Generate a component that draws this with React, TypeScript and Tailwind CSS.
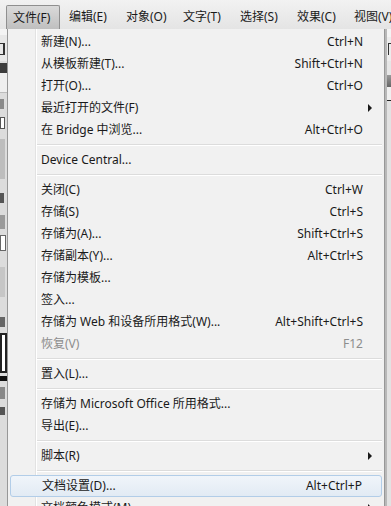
import React from "react";

type Item =
  | { sep: true }
  | { label: string; keys?: string; sub?: boolean; off?: boolean; hot?: boolean; sep?: false };

const items: Item[] = [
  { label: "新建(N)...", keys: "Ctrl+N" },
  { label: "从模板新建(T)...", keys: "Shift+Ctrl+N" },
  { label: "打开(O)...", keys: "Ctrl+O" },
  { label: "最近打开的文件(F)", sub: true },
  { label: "在 Bridge 中浏览...", keys: "Alt+Ctrl+O" },
  { sep: true },
  { label: "Device Central..." },
  { sep: true },
  { label: "关闭(C)", keys: "Ctrl+W" },
  { label: "存储(S)", keys: "Ctrl+S" },
  { label: "存储为(A)...", keys: "Shift+Ctrl+S" },
  { label: "存储副本(Y)...", keys: "Alt+Ctrl+S" },
  { label: "存储为模板..." },
  { label: "签入..." },
  { label: "存储为 Web 和设备所用格式(W)...", keys: "Alt+Shift+Ctrl+S" },
  { label: "恢复(V)", keys: "F12", off: true },
  { sep: true },
  { label: "置入(L)..." },
  { sep: true },
  { label: "存储为 Microsoft Office 所用格式..." },
  { label: "导出(E)..." },
  { sep: true },
  { label: "脚本(R)", sub: true },
  { sep: true },
  { label: "文档设置(D)...", keys: "Alt+Ctrl+P", hot: true },
  { label: "文档颜色模式(M)", sub: true },
];

const menus = ["文件(F)", "编辑(E)", "对象(O)", "文字(T)", "选择(S)", "效果(C)", "视图(V)"];

function Arrow() {
  return (
    <svg width="5" height="8" viewBox="0 0 5 8" className="absolute right-[11px]">
      <path d="M0 0 L4 4 L0 8 Z" fill="#1a1a1a" />
    </svg>
  );
}

export default function App() {
  return (
    <div className="w-[391px] h-[506px] overflow-hidden bg-[#d6d6d6] font-['Noto_Sans','Noto_Sans_CJK_SC',sans-serif] text-[12px] text-[#1a1a1a]">
      {/* menu bar */}
      <div className="h-[29px] bg-gradient-to-b from-[#f2f2f2] to-[#e4e4e4] flex items-start pt-[5px] pl-[6px] gap-[2px] whitespace-nowrap overflow-hidden">
        {menus.map((m, i) => (
          <div
            key={m}
            className={
              i === 0
                ? "shrink-0 w-[54px] h-[24px] pl-[6px] flex items-center bg-gradient-to-b from-[#dadada] to-[#bfbfbf] border border-b-0 border-[#8f8f8f] rounded-t-[2px]"
                : "shrink-0 w-[55px] h-[24px] pl-[7px] flex items-center"
            }
          >
            {m}
          </div>
        ))}
      </div>

      <div className="flex h-[477px]">
        {/* app background, left */}
        <div className="w-[7px] shrink-0 flex flex-col bg-[#dcdcdc] overflow-hidden">
          <div className="h-[6px] bg-[#f4f4f4]" />
          <div className="h-[26px] bg-[#e8e8e8]">
            <div className="w-[5px] h-[12px] mt-[8px] border-r-2 border-t border-b border-[#333]" />
          </div>
          <div className="h-[10px] bg-[#3c3c3c] mt-[2px]" />
          <div className="h-[20px] bg-[#efefef] border-b border-[#bcbcbc]" />
          <div className="h-[10px] mt-[6px] w-[4px] bg-[#8a8a8a]" />
          <div className="h-[12px] mt-[8px] w-[5px] border border-[#555] bg-white" />
          <div className="h-[40px] mt-[10px] w-[5px] bg-[#bdbdbd]" />
          <div className="h-[10px] mt-[14px] w-[4px] bg-[#555]" />
          <div className="h-[14px] mt-[12px] w-[5px] bg-[#9a9a9a]" />
          <div className="h-[16px] mt-[6px] w-[6px] border border-[#666] bg-white" />
          <div className="h-[30px] mt-[16px] w-[5px] bg-[#c6c6c6]" />
          <div className="h-[10px] mt-[20px] w-[5px] bg-[#666]" />
          <div className="h-[40px] mt-[6px] w-[7px] border-2 border-[#222] bg-white" />
          <div className="h-[5px] mt-[3px] bg-[#111]" />
          <div className="h-[12px] mt-[6px] w-[5px] bg-[#888]" />
          <div className="h-[8px] mt-[8px] w-[5px] bg-[#555]" />
        </div>

        {/* dropdown menu */}
        <div className="w-[378px] shrink-0 border-x border-[#979797] bg-[#f1f1f1] bg-[linear-gradient(to_right,#f1f1f1_27px,#e2e2e2_27px,#e2e2e2_28px,#ffffff_28px,#ffffff_29px,#f1f1f1_29px)] pt-[2px] whitespace-nowrap overflow-hidden">
          {items.map((it, i) =>
            it.sep ? (
              <div key={i} className="h-[8px] flex items-center pl-[29px] pr-[2px]">
                <div className="flex-1 border-t border-[#dcdcdc] border-b border-b-white" />
              </div>
            ) : (
              <div
                key={i}
                className={
                  "relative h-[22px] flex items-center " +
                  (it.hot
                    ? "mx-[2px] pl-[31px] pr-[19px] rounded-[3px] border border-[#b2cde8] bg-gradient-to-b from-[#f0f5fa] to-[#e2ebf4]"
                    : "pl-[33px] pr-[21px]") +
                  (it.off ? " text-[#8d8d8d]" : "")
                }
              >
                <span className="flex-1">{it.label}</span>
                {it.keys && <span>{it.keys}</span>}
                {it.sub && <Arrow />}
              </div>
            )
          )}
        </div>

        {/* app background, right */}
        <div className="flex-1 min-w-0 overflow-hidden flex flex-col bg-[#d9d9d9] border-l-2 border-[#b8b8b8]">
          <div className="h-[8px] bg-[#f4f4f4]" />
          <div className="h-[24px] bg-[#ececec]">
            <div className="w-[3px] h-[12px] mt-[6px] ml-[1px] border-l border-t border-[#333]" />
          </div>
          <div className="h-[14px] bg-[#e6e6e6]" />
          <div className="h-[12px] bg-gradient-to-b from-[#9a9a9a] to-[#666]" />
          <div className="h-[14px] bg-[#f0f0f0] border-b border-[#222]" />
          <div className="flex-1 bg-[#e2e2e2]" />
        </div>
      </div>
    </div>
  );
}
